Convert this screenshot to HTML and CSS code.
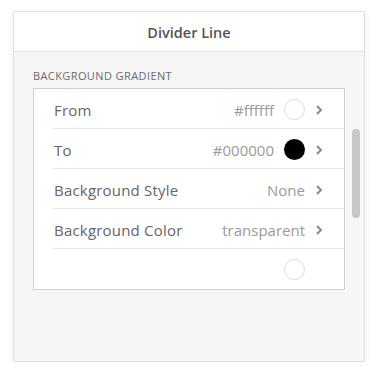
FILE: index.html
```html
<!DOCTYPE html>
<html>
<head>
<meta charset="utf-8">
<link rel="stylesheet" href="styles.css">
</head>
<body>
<div class="panel">
  <div class="header">Divider Line</div>
  <div class="body">
    <div class="section-label">BACKGROUND GRADIENT</div>
    <div class="content">
      <div class="list">
        <div class="row">
          <span class="label">From</span>
          <span class="value">#ffffff</span>
          <span class="swatch white"></span>
          <svg class="chev" width="8" height="12" viewBox="0 0 8 12"><path d="M2 2 L6 6 L2 10" fill="none" stroke="#8a8a8a" stroke-width="2"/></svg>
        </div>
        <div class="row">
          <span class="label">To</span>
          <span class="value">#000000</span>
          <span class="swatch black"></span>
          <svg class="chev" width="8" height="12" viewBox="0 0 8 12"><path d="M2 2 L6 6 L2 10" fill="none" stroke="#8a8a8a" stroke-width="2"/></svg>
        </div>
        <div class="row">
          <span class="label">Background Style</span>
          <span class="value">None</span>
          <svg class="chev" width="8" height="12" viewBox="0 0 8 12"><path d="M2 2 L6 6 L2 10" fill="none" stroke="#8a8a8a" stroke-width="2"/></svg>
        </div>
        <div class="row">
          <span class="label">Background Color</span>
          <span class="value">transparent</span>
          <svg class="chev" width="8" height="12" viewBox="0 0 8 12"><path d="M2 2 L6 6 L2 10" fill="none" stroke="#8a8a8a" stroke-width="2"/></svg>
        </div>
        <div class="row last">
          <span class="label"></span>
          <span class="swatch white"></span>
          <span class="chev-space"></span>
        </div>
      </div>
      <div class="scrolltrack"><div class="thumb"></div></div>
    </div>
  </div>
</div>
</body>
</html>
```
FILE: styles.css
```css
* { box-sizing: border-box; }
html, body { margin: 0; padding: 0; background: #ffffff; }
body {
  font-family: "Open Sans", Lato, sans-serif;
  padding: 11px 0 0 13px;
}
.panel {
  width: 352px;
  height: 351px;
  border: 1px solid #dedede;
  border-radius: 2px;
  background: #f6f6f6;
  box-shadow: 0 2px 8px rgba(0,0,0,0.06);
  display: flex;
  flex-direction: column;
  overflow: hidden;
}
.header {
  height: 40px;
  flex: none;
  background: #ffffff;
  border-bottom: 1px solid #e2e2e2;
  display: flex;
  align-items: center;
  justify-content: center;
  padding-top: 1px;
  font-size: 14.5px;
  font-weight: 600;
  color: #555555;
}
.body {
  padding: 17px 0 0 19px;
}
.section-label {
  font-size: 11px;
  letter-spacing: 0.4px;
  color: #6a6a6a;
  height: 13px;
  line-height: 13px;
}
.content {
  display: flex;
  margin-top: 6px;
}
.list {
  width: 312px;
  border: 1px solid #d0d0d0;
  background: #ffffff;
}
.row {
  height: 40px;
  margin-left: 19px;
  border-bottom: 1px solid #e6e6e6;
  display: flex;
  align-items: center;
  padding-right: 21px;
  padding-left: 1px;
  padding-top: 2px;
  font-size: 15px;
}
.row.last { border-bottom: none; padding-top: 0; }
.label {
  flex: 1;
  color: #666666;
  letter-spacing: 0.2px;
}
.value {
  color: #9a9a9a;
  margin-right: 10px;
}
.swatch {
  width: 21px;
  height: 21px;
  border-radius: 50%;
  margin-right: 10px;
  flex: none;
}
.swatch.white { border: 1px solid #dcdcdc; background: #ffffff; }
.swatch.black { background: #000000; }
.chev { flex: none; display: block; }
.chev-space { width: 8px; flex: none; }
.scrolltrack {
  margin-left: 7px;
  padding-top: 41px;
}
.thumb {
  width: 8px;
  height: 89px;
  border-radius: 4px;
  background: #c8c8c8;
}
```
